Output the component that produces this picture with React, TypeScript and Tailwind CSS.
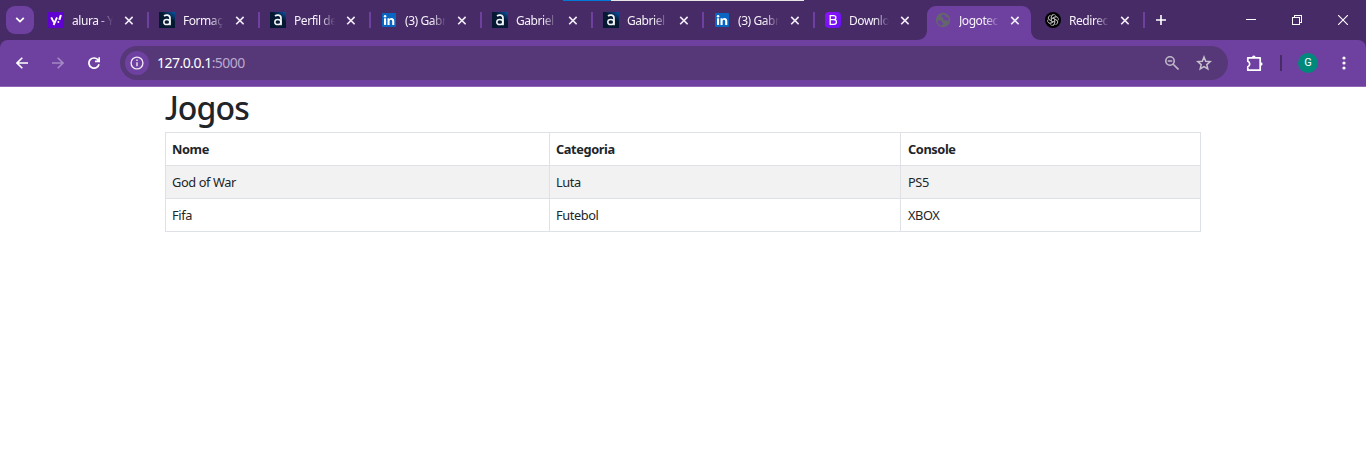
import React from "react";

type Kind = "yahoo" | "alura" | "linkedin" | "bootstrap" | "globe" | "openai";

function Favicon({ kind }: { kind: Kind }) {
  switch (kind) {
    case "yahoo":
      return (
        <span className="flex h-4 w-4 shrink-0 items-center justify-center bg-[#5f01d1]">
          <svg viewBox="0 0 16 16" className="h-4 w-4" fill="none" stroke="#fff" strokeWidth="1.9">
            <path d="M3.2 5.4 5.9 10.4M9 5.4 5.6 13" />
            <path d="M12.9 3 11.3 7.8" strokeWidth="2.1" />
            <circle cx="10.4" cy="10" r="1" fill="#fff" stroke="none" />
          </svg>
        </span>
      );
    case "alura":
      return (
        <span className="flex h-4 w-4 shrink-0 bg-[linear-gradient(215deg,#0a56a5_0%,#051933_38%,#051933_100%)]">
          <svg viewBox="0 0 16 16" className="h-4 w-4" fill="none" stroke="#f4f6f8" strokeWidth="1.5">
            <path d="M5 4C6.4 2.9 11 2.2 11 6.2V13.2" strokeWidth="1.7" />
            <ellipse cx="7.8" cy="10" rx="3" ry="2.6" />
          </svg>
        </span>
      );
    case "linkedin":
      return (
        <svg viewBox="0 0 16 16" className="h-4 w-4 shrink-0">
          <rect x="1" y="1" width="14" height="14" rx="1" fill="#0a66c2" />
          <g fill="#fff">
            <rect x="3" y="6.3" width="2.1" height="6.6" />
            <circle cx="4.05" cy="4.2" r="1.25" />
            <path d="M6.5 6.3h2v.9c.4-.7 1.1-1.1 2-1.1 2 0 2.8 1.3 2.8 3.1v3.7h-2.1V9.6c0-.9-.3-1.8-1.3-1.8s-1.3.8-1.3 1.7v3.4H6.5z" />
          </g>
        </svg>
      );
    case "bootstrap":
      return (
        <span className="flex h-4 w-4 shrink-0 rounded-sm bg-[linear-gradient(135deg,#9013fe,#6610f2)]">
          <svg viewBox="0 0 16 16" className="h-4 w-4" fill="none" stroke="#fff" strokeWidth="1.3">
            <path d="M5.2 3.7h3.4c3 0 3 4 0 4H5.2h3.7c3.4 0 3.4 4.6 0 4.6H5.2z" />
          </svg>
        </span>
      );
    case "globe":
      return (
        <svg viewBox="0 0 16 16" className="h-4 w-4 shrink-0">
          <circle cx="8" cy="8" r="7.2" fill="#63666b" />
          <g fill="#6e41a1">
            <path d="M8.2 2.6C6.4 3 5.8 4.6 6.8 5.3c.7.5 1.3 0 1.6.8.2.7-.4 1.2.3 1.8.8.6 1.7.1 2.4.6.7.5 1.4.4 2.5 0 .2-1.4 0-2.4-.5-3.4-1 .4-1.6.3-2.2-.2-.7-.6-.2-1.5-2.7-2.3z" />
            <path d="M2.3 8.4c1.6-.3 3.3-.3 4.2.5.7.7.3 1.3.9 1.8.7.5 1.2.9.7 1.5-.4.5-.9.6-1 1.4-2.7-.2-4.7-2.3-4.8-5.2z" />
          </g>
        </svg>
      );
    case "openai":
      return (
        <svg viewBox="0 0 16 16" className="h-4 w-4 shrink-0">
          <circle cx="8" cy="8" r="8" fill="#000" />
          <g fill="none" stroke="#b8b8b8" strokeWidth=".8">
            {[0, 60, 120, 180, 240, 300].map((a) => (
              <path key={a} transform={`rotate(${a} 8 8)`} d="M6.3 9V4.9a2.5 2.5 0 0 1 4.5-1.3M6.3 7 9.8 5a2.4 2.4 0 0 1 3 .6" />
            ))}
          </g>
        </svg>
      );
  }
}

function Close() {
  return (
    <svg viewBox="0 0 9 9" className="h-[9px] w-[9px] shrink-0" stroke="#f0ebf5" strokeWidth="1.6">
      <path d="M1.2.9 8.6 8.3M8.6.9 1.2 8.3" />
    </svg>
  );
}

const tabs: { kind: Kind; title: string; narrow?: boolean; active?: boolean; line?: boolean }[] = [
  { kind: "yahoo", title: "alura - Y", line: true },
  { kind: "alura", title: "Formaç", line: true },
  { kind: "alura", title: "Perfil de", line: true },
  { kind: "linkedin", title: "(3) Gabr", line: true },
  { kind: "alura", title: "Gabriel", line: true },
  { kind: "alura", title: "Gabriel", line: true },
  { kind: "linkedin", title: "(3) Gabr", line: true },
  { kind: "bootstrap", title: "Downlo", narrow: true },
  { kind: "globe", title: "Jogotec", narrow: true, active: true },
  { kind: "openai", title: "Redirec", narrow: true, line: true },
];

function Tab({ kind, title, narrow, active, line }: (typeof tabs)[number]) {
  return (
    <div className={`relative flex h-10 shrink-0 items-center pl-[10px] ${narrow ? "w-[110px]" : "w-[111px]"}`}>
      {active && (
        <svg viewBox="0 0 124 34" className="absolute -left-2 top-1.5 h-[34px] w-[124px]" fill="#6e41a1">
          <path d="M0 34c6 0 10-4 10-10V9c0-5 4-9 9-9h86c5 0 9 4 9 9v15c0 6 4 10 10 10z" />
        </svg>
      )}
      <div className="relative flex h-full w-full items-center">
        <Favicon kind={kind} />
        <div
          className={`ml-2 mt-px overflow-hidden whitespace-nowrap text-[12px] leading-5 tracking-[-0.45px] text-[#f6f2fa] [mask-image:linear-gradient(to_right,#000_65%,transparent)] ${narrow ? "w-10" : "w-[41px]"}`}
        >
          {title}
        </div>
        <div className="ml-[11px] flex">
          <Close />
        </div>
      </div>
      {line && <div className="h-4 w-0.5 shrink-0 bg-[#6e41a1]" />}
    </div>
  );
}

function TabStrip() {
  return (
    <div className="relative flex h-10 items-center bg-[#472b66] pl-1.5">
      <div className="absolute left-[563px] top-0 flex h-px w-[241px] bg-[#e6e6e6]">
        <div className="h-px w-12 bg-[#0078d7]" />
      </div>
      <button className="mr-1 flex h-7 w-7 items-center justify-center rounded-[9px] bg-[#6e41a1]">
        <svg viewBox="0 0 10 6" className="h-1.5 w-2.5" fill="none" stroke="#fff" strokeWidth="1.8">
          <path d="M1.2.8 5 4.6 8.8.8" />
        </svg>
      </button>
      {tabs.map((t, i) => (
        <Tab key={i} {...t} />
      ))}
      <svg viewBox="0 0 10 10" className="ml-[11px] h-2.5 w-2.5" stroke="#fff" strokeWidth="1.6">
        <path d="M5 0v10M0 5h10" />
      </svg>
      <div className="ml-auto flex items-center pr-[18px]">
        <svg viewBox="0 0 10 10" className="mr-9 h-2.5 w-2.5" stroke="#fff" shapeRendering="crispEdges">
          <path d="M0 4.5h10" />
        </svg>
        <svg viewBox="0 0 10 10" className="mr-9 h-2.5 w-2.5" fill="none" stroke="#fff" shapeRendering="crispEdges">
          <path d="M.5 2.5h7v7h-7zM2.5 2.5v-2h7v7h-2" />
        </svg>
        <svg viewBox="0 0 10 10" className="h-2.5 w-2.5" stroke="#fff" strokeWidth="1.1">
          <path d="M0 0 10 10M10 0 0 10" />
        </svg>
      </div>
    </div>
  );
}

function Toolbar() {
  return (
    <div className="bg-[#472b66]">
      <div className="flex h-[47px] items-center rounded-t-lg border-b border-[#8f67b5] bg-[#6e41a1] pl-4">
        <svg viewBox="0 0 12 12" className="h-3 w-3" fill="none" stroke="#fff" strokeWidth="1.6">
          <path d="M12 6H1.2M6.3.7 1 6l5.3 5.3" />
        </svg>
        <svg viewBox="0 0 12 12" className="ml-6 h-3 w-3" fill="none" stroke="#a488c4" strokeWidth="1.6">
          <path d="M0 6h10.8M5.7.7 11 6l-5.3 5.3" />
        </svg>
        <svg viewBox="0 0 12 12" className="ml-6 h-3 w-3" fill="none" stroke="#fff" strokeWidth="1.7">
          <path d="M10.3 3.3A5.1 5.1 0 1 0 11 7.2M11.2.2v4.2H7" />
        </svg>
        <div className="ml-5 flex h-[34px] w-[1108px] items-center rounded-full bg-[#563879] pl-[5px] pr-4">
          <div className="flex h-6 w-6 items-center justify-center rounded-full bg-[#6e41a1]">
            <svg viewBox="0 0 14 14" className="h-3.5 w-3.5" fill="none" stroke="#eee6f5" strokeWidth="1.4">
              <circle cx="7" cy="7" r="5.9" />
              <path d="M7 6.2v4M7 3.6v1.5" />
            </svg>
          </div>
          <div className="ml-2 text-[14px] leading-5 tracking-[-0.52px] text-[#b9a8cc]">
            <span className="text-white">127.0.0.1</span>:5000
          </div>
          <svg viewBox="0 0 14 14" className="ml-auto h-3.5 w-3.5" fill="none" stroke="#c0b8c9" strokeWidth="1.6">
            <circle cx="5" cy="5" r="4.2" />
            <path d="M8.2 8.2 13.5 13.5M2.8 5h4.4" />
          </svg>
          <svg viewBox="0 0 16 16" className="ml-[17px] h-4 w-4" fill="none" stroke="#c7bfce" strokeWidth="1.5">
            <path d="m8 2 1.7 4.2 4.5.4-3.4 3 1 4.4L8 11.6 4.2 14l1-4.4-3.4-3 4.5-.4z" />
          </svg>
        </div>
        <svg viewBox="0 0 17 17" className="ml-[18px] h-[17px] w-[17px]" fill="none" stroke="#fff" strokeWidth="1.7">
          <path d="M1.8 2.8h12.4v12.4H1.8v-3.5c2.5-.7 2.5-4.7 0-5.4z" strokeLinejoin="round" />
          <path d="M6 2.4a1.8 1.8 0 0 1 3.6 0zM14.8 7.2a1.8 1.8 0 0 1 0 3.6z" fill="#fff" stroke="none" />
        </svg>
        <div className="ml-[17px] h-4 w-0.5 bg-[#472b66]" />
        <div className="ml-4 flex h-5 w-5 items-center justify-center rounded-full bg-[#00897b] pt-px font-[Roboto,sans-serif] text-[11px] text-white">
          G
        </div>
        <svg viewBox="0 0 4 14" className="ml-6 h-3.5 w-1" fill="#fff">
          <circle cx="2" cy="2" r="1.6" />
          <circle cx="2" cy="7" r="1.6" />
          <circle cx="2" cy="12" r="1.6" />
        </svg>
      </div>
    </div>
  );
}

const rows = [
  ["God of War", "Luta", "PS5"],
  ["Fifa", "Futebol", "XBOX"],
];

export default function App() {
  return (
    <div className="h-[453px] overflow-hidden bg-white font-['Noto_Sans','Open_Sans',sans-serif]">
      <TabStrip />
      <Toolbar />
      <main className="pl-[165px] text-[#212529]">
        <h1 className="h-[45px] text-[32px] font-medium leading-[41px] tracking-[-0.8px]">
          <span className="font-[Lato,sans-serif]">J</span>ogos
        </h1>
        <table className="w-[1036px] table-fixed border-collapse text-[12.8px] leading-4 tracking-[-0.4px]">
          <colgroup>
            <col className="w-[384px]" />
            <col className="w-[351px]" />
            <col />
          </colgroup>
          <thead>
            <tr className="h-[33px]">
              {["Nome", "Categoria", "Console"].map((h) => (
                <th key={h} className="border border-[#dee2e6] px-1.5 text-left font-bold last:pl-[7px]">
                  {h}
                </th>
              ))}
            </tr>
          </thead>
          <tbody>
            {rows.map((r) => (
              <tr key={r[0]} className="h-[33px] odd:bg-[#f2f2f2]">
                {r.map((c) => (
                  <td key={c} className="border border-[#dee2e6] px-1.5 last:pl-[7px]">
                    {c}
                  </td>
                ))}
              </tr>
            ))}
          </tbody>
        </table>
      </main>
    </div>
  );
}
